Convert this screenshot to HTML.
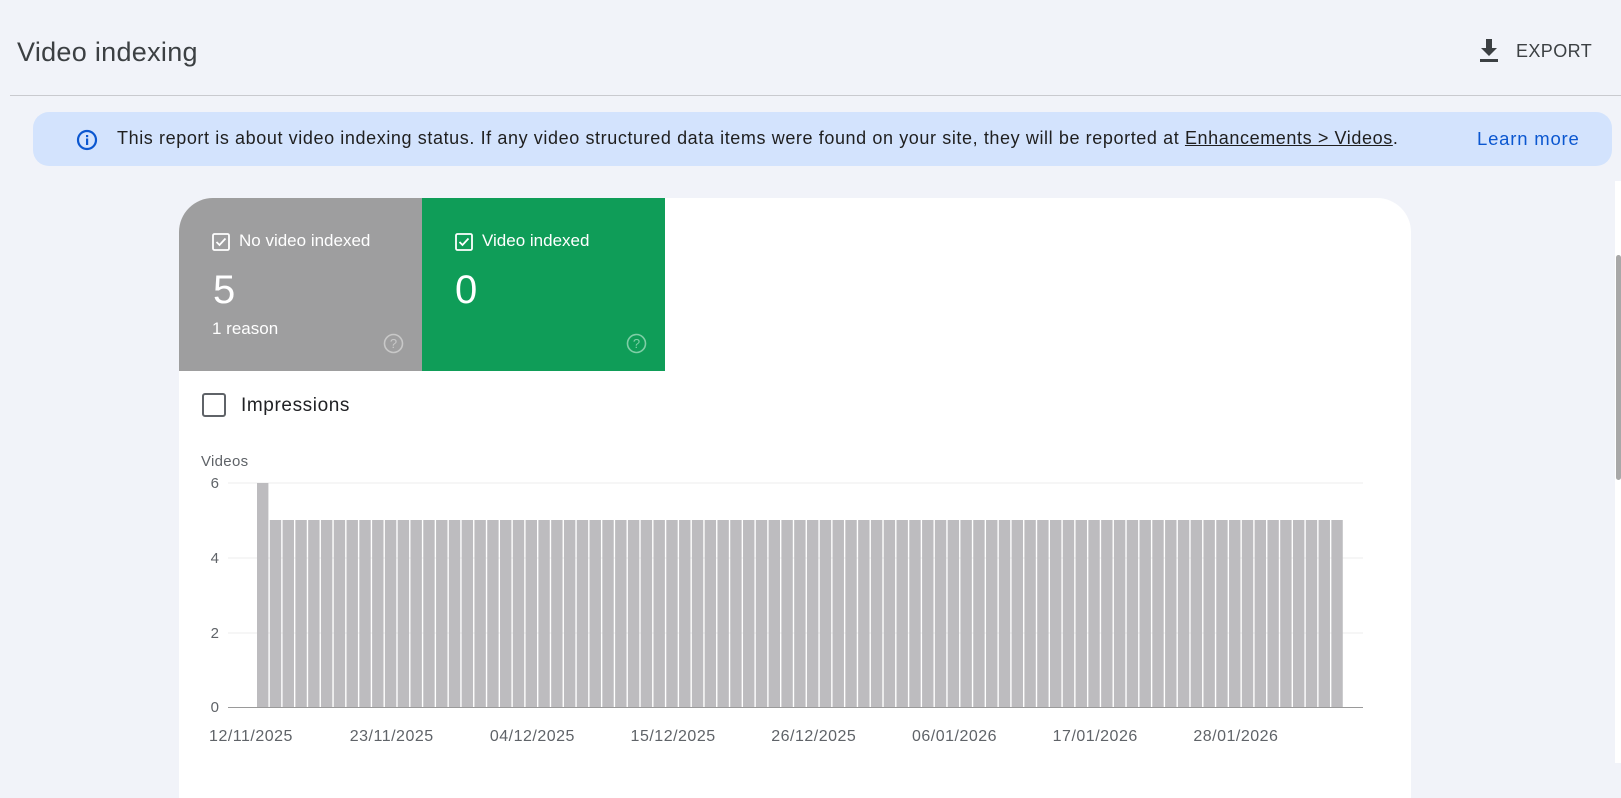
<!DOCTYPE html>
<html><head><meta charset="utf-8"><style>
*{margin:0;padding:0;box-sizing:border-box}
body{width:1621px;height:763px;overflow:hidden;background:#f1f3f9;font-family:"Liberation Sans",Arial,sans-serif;position:relative;color:#202124}
.abs{position:absolute}
</style></head><body>
<div class="abs" style="left:17px;top:37px;font-size:27px;color:#3c4043;letter-spacing:0.3px">Video indexing</div>
<svg class="abs" style="left:1478px;top:38px" width="22" height="26" viewBox="0 0 22 26"><path d="M8 1h6v9h5l-8 8-8-8h5z" fill="#3c4043"/><rect x="2" y="21" width="18" height="3" fill="#3c4043"/></svg>
<div class="abs" style="left:1516px;top:41px;font-size:18px;color:#3c4043;letter-spacing:.4px">EXPORT</div>
<div class="abs" style="left:10px;top:95px;width:1611px;height:1px;background:#c9cacf"></div>
<div class="abs" style="left:33px;top:112px;width:1579px;height:54px;background:#d3e3fd;border-radius:16px"></div>
<svg class="abs" style="left:76px;top:129px" width="22" height="22" viewBox="0 0 22 22"><circle cx="11" cy="11" r="9" fill="none" stroke="#0b57d0" stroke-width="2.2"/><rect x="10" y="9.5" width="2.2" height="6.5" fill="#0b57d0"/><rect x="10" y="6" width="2.2" height="2.2" fill="#0b57d0"/></svg>
<div class="abs" style="left:117px;top:128px;font-size:18px;letter-spacing:0.6px;color:#1f1f1f;white-space:nowrap">This report is about video indexing status. If any video structured data items were found on your site, they will be reported at <span style="text-decoration:underline">Enhancements &gt; Videos</span>.</div>
<div class="abs" style="left:1477px;top:128px;font-size:18.5px;letter-spacing:0.8px;color:#0b57d0">Learn more</div>
<div class="abs" style="left:1615px;top:181px;width:6px;height:582px;background:#fff"></div>
<div class="abs" style="left:1616px;top:255px;width:5px;height:225px;background:#a8a8a8;border-radius:3px"></div>
<div class="abs" style="left:179px;top:198px;width:1232px;height:600px;background:#fff;border-radius:34px 34px 0 0;overflow:hidden">
 <div class="abs" style="left:0;top:0;width:243px;height:173px;background:#9e9e9f"></div>
 <div class="abs" style="left:243px;top:0;width:243px;height:173px;background:#0f9d58"></div>
</div>
<svg class="abs" style="left:212px;top:233px" width="18" height="18" viewBox="0 0 18 18"><rect x="1" y="1" width="16" height="16" rx="1.5" fill="none" stroke="#fff" stroke-width="1.8"/><path d="M4.5 9l3 3 6-6.5" fill="none" stroke="#fff" stroke-width="1.8"/></svg>
<div class="abs" style="left:239px;top:231px;font-size:17px;color:#fff">No video indexed</div>
<div class="abs" style="left:213px;top:268px;font-size:40px;color:#fff">5</div>
<div class="abs" style="left:212px;top:319px;font-size:17px;color:#fff">1 reason</div>
<svg class="abs" style="left:383px;top:333px" width="21" height="21" viewBox="0 0 21 21"><circle cx="10.5" cy="10.5" r="9" fill="none" stroke="#c8c8c8" stroke-width="1.6"/><text x="10.5" y="15" font-size="13" text-anchor="middle" fill="#c8c8c8" font-family="Liberation Sans">?</text></svg>
<svg class="abs" style="left:455px;top:233px" width="18" height="18" viewBox="0 0 18 18"><rect x="1" y="1" width="16" height="16" rx="1.5" fill="none" stroke="#fff" stroke-width="1.8"/><path d="M4.5 9l3 3 6-6.5" fill="none" stroke="#fff" stroke-width="1.8"/></svg>
<div class="abs" style="left:482px;top:231px;font-size:17px;color:#fff">Video indexed</div>
<div class="abs" style="left:455px;top:268px;font-size:40px;color:#fff">0</div>
<svg class="abs" style="left:626px;top:333px" width="21" height="21" viewBox="0 0 21 21"><circle cx="10.5" cy="10.5" r="9" fill="none" stroke="#7fcea6" stroke-width="1.6"/><text x="10.5" y="15" font-size="13" text-anchor="middle" fill="#7fcea6" font-family="Liberation Sans">?</text></svg>
<div class="abs" style="left:202px;top:393px;width:24px;height:24px;border:2.5px solid #5f6368;border-radius:3px"></div>
<div class="abs" style="left:241px;top:395px;font-size:19px;letter-spacing:0.6px;color:#202124">Impressions</div>
<svg class="abs" id="ch" style="left:0;top:0" width="1621" height="763"></svg>
<script>
var s='';
s+='<text x="201" y="466" font-size="15" fill="#5f6368" font-family="Liberation Sans" letter-spacing="0.3">Videos</text>';
var ys=[[6,483],[4,558],[2,633],[0,707]];
ys.forEach(function(a){s+='<text x="219" y="'+(a[1]+5)+'" font-size="15" fill="#5f6368" text-anchor="end" font-family="Liberation Sans">'+a[0]+'</text>';
if(a[0]>0)s+='<line x1="228" x2="1363" y1="'+a[1]+'" y2="'+a[1]+'" stroke="#ececec"/>';});
var p=12.79;
for(var i=0;i<85;i++){var x=257+i*p;var t=i==0?483:520;s+='<rect x="'+x.toFixed(2)+'" y="'+t+'" width="11.4" height="'+(707-t)+'" fill="#bdbcbf"/>';}
s+='<line x1="228" x2="1363" y1="707.5" y2="707.5" stroke="#9a9a9a"/>';
var d=['12/11/2025','23/11/2025','04/12/2025','15/12/2025','26/12/2025','06/01/2026','17/01/2026','28/01/2026'];
d.forEach(function(l,i){s+='<text x="'+(251+i*140.7).toFixed(1)+'" y="741" font-size="16" letter-spacing="0.5" fill="#5f6368" text-anchor="middle" font-family="Liberation Sans">'+l+'</text>';});
document.getElementById('ch').innerHTML=s;
</script>
</body></html>
